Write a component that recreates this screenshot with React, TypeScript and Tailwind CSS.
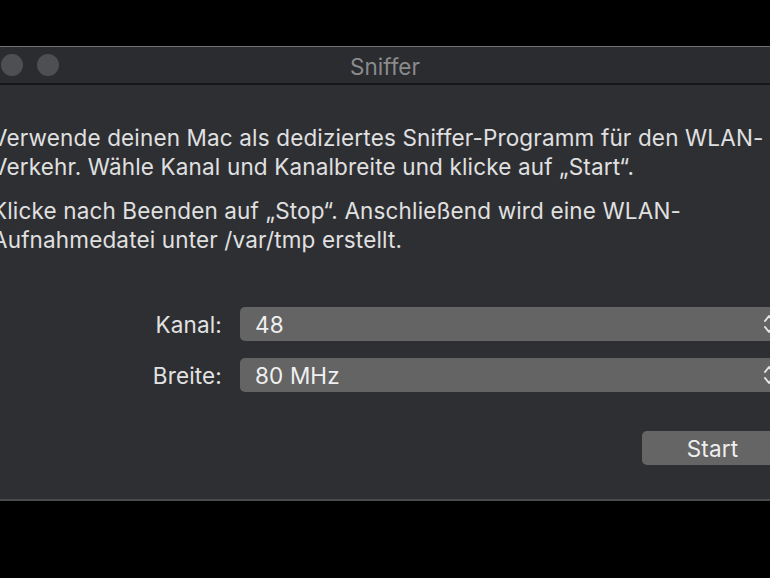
function Chevrons() {
  return (
    <svg width="12" height="22" viewBox="0 0 12 22" fill="none" stroke="#e6e6e6" strokeWidth={2} strokeLinecap="round" strokeLinejoin="round">
      <path d="M2 8l4-5 4 5" />
      <path d="M2 14l4 5 4-5" />
    </svg>
  )
}

function Field({ label, value }: { label: string; value: string }) {
  return (
    <div className="flex items-center">
      <div className="w-[289px] pr-[18px] text-right text-[#e2e2e2]">{label}</div>
      <div className="flex-1 h-[34px] rounded-[5px] bg-[#646464] flex items-center justify-between pl-[15px] pr-[8px] text-[#f0f0f0]">
        <span>{value}</span>
        <Chevrons />
      </div>
    </div>
  )
}

export default function App() {
  return (
    <div className="w-[770px] h-[578px] bg-black overflow-hidden pt-[46px]" style={{ fontFamily: 'Inter, "Noto Sans", sans-serif' }}>
      <div className="ml-[-49px] w-[868px] bg-[#2e2f33] border-t border-[#707072] border-b-2 border-b-[#4a4b4e]">
        {/* Title bar */}
        <div className="h-[38px] grid grid-cols-[1fr_auto_1fr] items-center bg-[#2b2c30] border-b-2 border-[#161719]">
          <div className="flex items-center gap-[14px] pl-[14px]">
            <span className="w-[22px] h-[22px] rounded-full bg-[#4e4f53]" />
            <span className="w-[22px] h-[22px] rounded-full bg-[#4e4f53]" />
            <span className="w-[22px] h-[22px] rounded-full bg-[#4e4f53]" />
          </div>
          <div className="text-[22.5px] text-[#8b8b8d] pt-[3px]">Sniffer</div>
          <div />
        </div>

        {/* Content */}
        <div className="pl-[41px] pr-[36px] pt-[38px] pb-[34px] text-[22.5px] leading-[29px] tracking-[0.15px]">
          <p className="text-[#e0e0e0] whitespace-nowrap">
            Verwende deinen Mac als dediziertes Sniffer-Programm für den WLAN-
            <br />
            Verkehr. Wähle Kanal und Kanalbreite und klicke auf „Start“.
          </p>
          <p className="mt-[15px] text-[#e0e0e0] whitespace-nowrap">
            Klicke nach Beenden auf „Stop“. Anschließend wird eine WLAN-
            <br />
            Aufnahmedatei unter /var/tmp erstellt.
          </p>

          <div className="mt-[53px] ml-[-41px] flex flex-col gap-[17px]">
            <Field label="Kanal:" value="48" />
            <Field label="Breite:" value="80 MHz" />
          </div>

          <div className="mt-[39px] flex justify-end">
            <button className="w-[141px] h-[34px] rounded-[5px] bg-[#656565] text-[#efefef] text-[22.5px]">Start</button>
          </div>
        </div>
      </div>
    </div>
  )
}
